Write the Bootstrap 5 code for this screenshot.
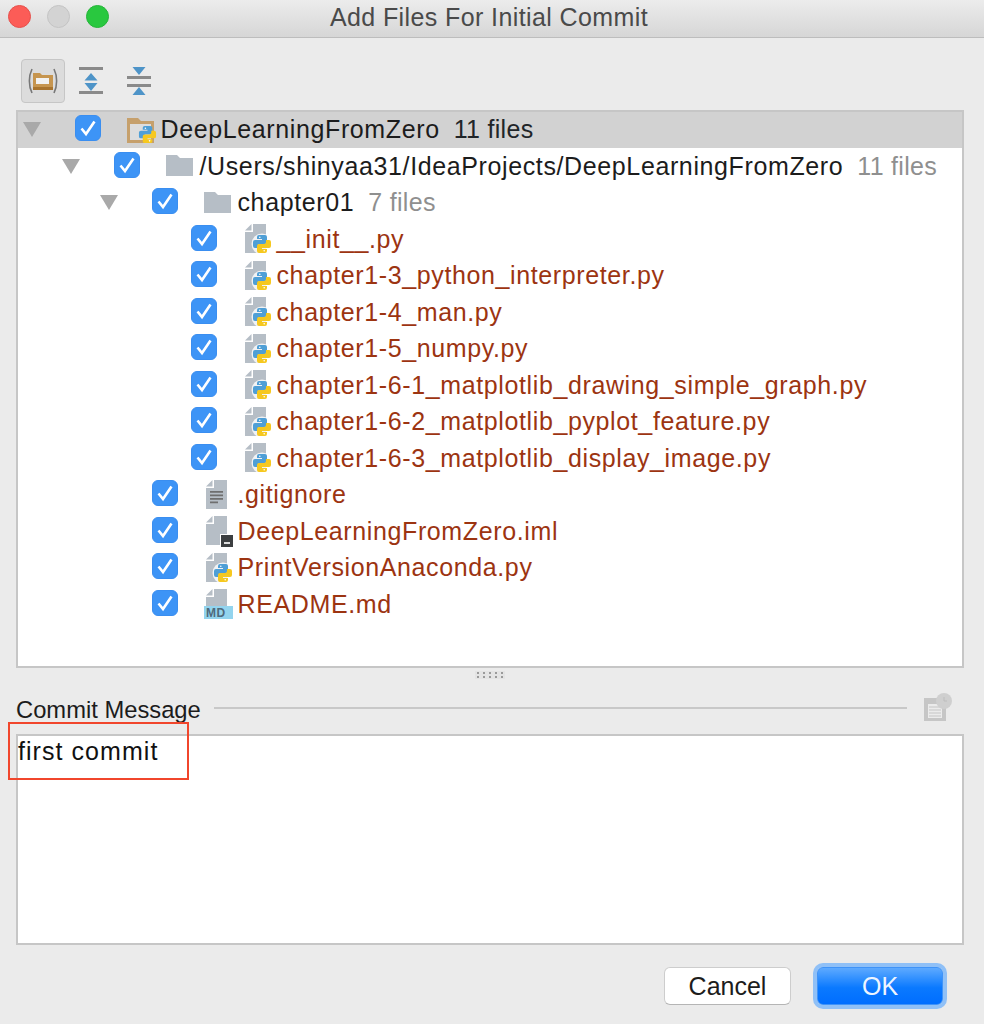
<!DOCTYPE html>
<html lang="en">
<head>
    <meta charset="UTF-8">
    <meta name="viewport" content="width=device-width, initial-scale=1.0">
    <title>Add Files For Initial Commit</title>
    <link href="https://cdn.jsdelivr.net/npm/bootstrap@5.3.0/dist/css/bootstrap.min.css" rel="stylesheet">
    <style>
        html, body { height: 1024px; overflow: hidden; }
        body {
            background: #ebebeb;
            font-family: "Liberation Sans", Arial, sans-serif;
            font-size: 25px;
            color: #1c1c1c;
        }
        .dialog { height: 1024px; position: relative; }
        .titlebar {
            height: 38px;
            background: linear-gradient(#ececec, #d6d6d6);
            border-bottom: 1px solid #bdbdbd;
            padding: 0 0 4px 8px;
            gap: 16px;
        }
        .light { width: 23px; height: 23px; border-radius: 50%; }
        .light-red { background: #fc5c57; border: 1px solid #e6504b; }
        .light-off { background: #d3d3d3; border: 1px solid #c4c4c4; }
        .light-green { background: #29c83f; border: 1px solid #25b539; }
        .wintitle {
            position: absolute; top: 0; left: 0; right: 6px; height: 37px;
            line-height: 35px; text-align: center; color: #4a4a4a; font-size: 25px; letter-spacing: .4px;
        }
        .toolbar { height: 71.5px; padding: 20.5px 0 0 21px; }
        .toolbtn { width: 44px; height: 44px; border-radius: 4px; border: 1px solid transparent; }
        .toolbtn-on { background: #dcdcdc; border-color: #c6c6c6; }
        .toolgap { margin-right: 4px; }
        .treepane {
            height: 558px; margin: 0 20px 0 16px;
            background: #fff; border: 2px solid #c6c6c6;
        }
        .treerow { height: 36.5px; white-space: nowrap; letter-spacing: .62px; }
        .treerow-sel { background: #d2d2d2; }
        .lvl0 { padding-left: 5px; }
        .lvl1 { padding-left: 44px; }
        .lvl2 { padding-left: 82px; }
        .lvl3 { padding-left: 121px; }
        .arrowslot { width: 52px; flex: none; }
        .arrow {
            width: 0; height: 0; display: block;
            border-left: 9px solid transparent; border-right: 9px solid transparent;
            border-top: 15px solid #a9a9a9;
        }
        .treerow .form-check-input {
            width: 26px; height: 26px; margin: 0 0 3px 0; flex: none;
            border: 1px solid #3a8ef0; border-radius: 6px; opacity: 1;
            background-color: #3d94f6;
            background-size: 26px;
            background-image: url("data:image/svg+xml,%3csvg xmlns='http://www.w3.org/2000/svg' viewBox='0 0 26 26'%3e%3cpath fill='none' stroke='%23fff' stroke-width='2.6' d='M6.500 13.500l4.500 5.500 8.500-12.500'/%3e%3c/svg%3e");
        }
        .nodeicon { width: 30px; height: 30px; margin-left: 28px; margin-right: 1.5px; flex: none; overflow: visible; }
        .filename { color: #9c3411; }
        .count { color: #8f8f8f; margin-left: 14px; letter-spacing: .3px; }
        .splitter { height: 30px; padding-top: 3px; }
        .grip {
            width: 30px; height: 8px; margin-right: 5px;
            background-image: radial-gradient(circle, #9a9a9a 1px, transparent 1.4px);
            background-size: 6px 4px; background-color: #e4e4e4;
        }
        .msghead { height: 25px; margin: 0 20px 0 16px; font-size: 23.75px; }
        .msghead .rule { height: 2px; background: #c8c8c8; margin: 0 0 4px 13px; }
        .msgicon { width: 32px; height: 32px; margin: 0 9px 4px 16px; flex: none; }
        .msgbox {
            display: block; width: calc(100% - 36px); height: 211px; margin: 11px 20px 0 16px;
            background: #fff; border: 2px solid #c6c6c6; border-radius: 0; resize: none;
            padding: 0; font-size: 25px; letter-spacing: 1.05px; color: #111; line-height: 30px;
        }
        .actions { padding: 22px 41px 0 0; gap: 26px; }
        .dlgbtn-cancel {
            width: 127px; height: 38.5px; padding: 2px 0 0;
            background: #fff; border: 1px solid #cdcdcd; border-bottom-color: #b5b5b5;
            border-radius: 6px; font-size: 25px; color: #1c1c1c; line-height: 1;
        }
        .dlgbtn-ok {
            width: 126px; height: 38.5px; padding: 2px 0 0; margin: 0;
            background: linear-gradient(#5eaaff, #0a79ff 55%, #006eff);
            border: 1px solid #3f93f8; border-radius: 6px;
            box-shadow: 0 0 0 4px #8fc0f7;
            font-size: 25px; color: #eef5ff; line-height: 1;
        }
        .callout {
            position: absolute; left: 8px; top: 722px; width: 181px; height: 58px;
            border: 2px solid #f1462c;
        }
    </style>
</head>
<body>
    <svg width="0" height="0" class="position-absolute">
        <defs>
            <symbol id="py" viewBox="0 0 20 20">
                <path id="pyhalf" fill="#4f9fd6" d="M5 3a2 2 0 0 1 2-2h6a2 2 0 0 1 2 2v5a2 2 0 0 1-2 2H8a2 2 0 0 0-2 2v2H3a2 2 0 0 1-2-2V8a2 2 0 0 1 2-2h7V5H5z"/>
                <path fill="#f6c81f" d="M5 3a2 2 0 0 1 2-2h6a2 2 0 0 1 2 2v5a2 2 0 0 1-2 2H8a2 2 0 0 0-2 2v2H3a2 2 0 0 1-2-2V8a2 2 0 0 1 2-2h7V5H5z" transform="rotate(180 10 10)"/>
                <circle cx="7.800" cy="3.300" r=".8" fill="#fff"/>
                <circle cx="12.200" cy="16.700" r=".8" fill="#fff"/>
            </symbol>
            <symbol id="sheet" viewBox="0 0 30 30">
                <path fill="#b6bec6" d="M8 0h13v29H0V8h8z"/>
                <path fill="#b6bec6" d="M0 6.500 6.500 0v6.500z"/>
            </symbol>
            <symbol id="pyfile" viewBox="0 0 30 30">
                <use href="#sheet" x="0" y="0" width="30" height="30"/>
                <circle cx="17" cy="20" r="10.500" fill="#fff" opacity=".8"/>
                <use href="#py" x="7" y="10" width="20" height="20"/>
            </symbol>
        </defs>
    </svg>

    <div class="dialog">
        <div class="titlebar d-flex align-items-center">
            <span class="light light-red"></span>
            <span class="light light-off"></span>
            <span class="light light-green"></span>
        </div>
        <div class="wintitle">Add Files For Initial Commit</div>

        <div class="toolbar d-flex align-items-start">
            <div class="toolbtn toolbtn-on toolgap d-flex align-items-center justify-content-center">
                <svg width="32" height="32" viewBox="0 0 32 32">
                    <path fill="none" stroke="#777" stroke-width="1.600" d="M5 4C1.500 11 1.500 21 5 28M27 4c3.500 7 3.500 17 0 24"/>
                    <path fill="#c6954f" d="M6 8h7l2 2h11v15H6z"/>
                    <rect x="9" y="13" width="13" height="6" fill="#f2f2f2"/>
                    <rect x="6" y="22" width="20" height="3" fill="#a9742e"/>
                </svg>
            </div>
            <div class="toolbtn toolgap d-flex align-items-center justify-content-center">
                <svg width="26" height="30" viewBox="0 0 26 30">
                    <rect x="1" y="1" width="24" height="3" fill="#8a8a8a"/>
                    <rect x="1" y="25" width="24" height="3" fill="#8a8a8a"/>
                    <path fill="#4e94c8" d="M13 7l6.500 7.500H6.500zM6.500 17h13L13 25z"/>
                </svg>
            </div>
            <div class="toolbtn d-flex align-items-center justify-content-center">
                <svg width="26" height="30" viewBox="0 0 26 30">
                    <rect x="1" y="10" width="24" height="3" fill="#8a8a8a"/>
                    <rect x="1" y="18" width="24" height="3" fill="#8a8a8a"/>
                    <path fill="#4e94c8" d="M6.500 1h13L13 9zM13 21l6.500 8h-13z"/>
                </svg>
            </div>
        </div>

        <div class="treepane">
            <div class="treerow treerow-sel lvl0 d-flex align-items-center">
                <span class="arrowslot"><span class="arrow"></span></span>
                <input class="form-check-input" type="checkbox" checked>
                <svg class="nodeicon" viewBox="0 0 30 30">
                    <path fill="#c6a06c" d="M-2 3h11l3 3h13v22H-2z"/>
                    <rect x="1" y="9" width="21" height="16" fill="#ddd"/>
                    <use href="#py" x="9" y="10" width="19" height="19"/>
                </svg>
                <span>DeepLearningFromZero</span><span class="count text-dark">11 files</span>
            </div>
            <div class="treerow lvl1 d-flex align-items-center">
                <span class="arrowslot"><span class="arrow"></span></span>
                <input class="form-check-input" type="checkbox" checked>
                <svg class="nodeicon" viewBox="0 0 30 30"><path fill="#b6bec6" d="M-2 4h11l3 3h13v18H-2z"/></svg>
                <span>/Users/shinyaa31/IdeaProjects/DeepLearningFromZero</span><span class="count">11 files</span>
            </div>
            <div class="treerow lvl2 d-flex align-items-center">
                <span class="arrowslot"><span class="arrow"></span></span>
                <input class="form-check-input" type="checkbox" checked>
                <svg class="nodeicon" viewBox="0 0 30 30"><path fill="#b6bec6" d="M-2 4h11l3 3h13v18H-2z"/></svg>
                <span>chapter01</span><span class="count">7 files</span>
            </div>
            <div class="treerow lvl3 d-flex align-items-center">
                <span class="arrowslot"></span>
                <input class="form-check-input" type="checkbox" checked>
                <svg class="nodeicon"><use href="#pyfile"/></svg>
                <span class="filename">__init__.py</span>
            </div>
            <div class="treerow lvl3 d-flex align-items-center">
                <span class="arrowslot"></span>
                <input class="form-check-input" type="checkbox" checked>
                <svg class="nodeicon"><use href="#pyfile"/></svg>
                <span class="filename">chapter1-3_python_interpreter.py</span>
            </div>
            <div class="treerow lvl3 d-flex align-items-center">
                <span class="arrowslot"></span>
                <input class="form-check-input" type="checkbox" checked>
                <svg class="nodeicon"><use href="#pyfile"/></svg>
                <span class="filename">chapter1-4_man.py</span>
            </div>
            <div class="treerow lvl3 d-flex align-items-center">
                <span class="arrowslot"></span>
                <input class="form-check-input" type="checkbox" checked>
                <svg class="nodeicon"><use href="#pyfile"/></svg>
                <span class="filename">chapter1-5_numpy.py</span>
            </div>
            <div class="treerow lvl3 d-flex align-items-center">
                <span class="arrowslot"></span>
                <input class="form-check-input" type="checkbox" checked>
                <svg class="nodeicon"><use href="#pyfile"/></svg>
                <span class="filename">chapter1-6-1_matplotlib_drawing_simple_graph.py</span>
            </div>
            <div class="treerow lvl3 d-flex align-items-center">
                <span class="arrowslot"></span>
                <input class="form-check-input" type="checkbox" checked>
                <svg class="nodeicon"><use href="#pyfile"/></svg>
                <span class="filename">chapter1-6-2_matplotlib_pyplot_feature.py</span>
            </div>
            <div class="treerow lvl3 d-flex align-items-center">
                <span class="arrowslot"></span>
                <input class="form-check-input" type="checkbox" checked>
                <svg class="nodeicon"><use href="#pyfile"/></svg>
                <span class="filename">chapter1-6-3_matplotlib_display_image.py</span>
            </div>
            <div class="treerow lvl2 d-flex align-items-center">
                <span class="arrowslot"></span>
                <input class="form-check-input" type="checkbox" checked>
                <svg class="nodeicon" viewBox="0 0 30 30">
                    <use href="#sheet"/>
                    <path fill="#6f6f6f" d="M4 11h13v1.800H4zM4 14.500h13v1.800H4zM4 18h13v1.800H4zM4 21.500h8v1.800H4z"/>
                </svg>
                <span class="filename">.gitignore</span>
            </div>
            <div class="treerow lvl2 d-flex align-items-center">
                <span class="arrowslot"></span>
                <input class="form-check-input" type="checkbox" checked>
                <svg class="nodeicon" viewBox="0 0 30 30">
                    <use href="#sheet"/>
                    <rect x="14" y="18" width="14" height="13" fill="#fff"/>
                    <rect x="15" y="19" width="12" height="12" fill="#3c3f41"/>
                    <rect x="18" y="26" width="6" height="2" fill="#ddd"/>
                </svg>
                <span class="filename">DeepLearningFromZero.iml</span>
            </div>
            <div class="treerow lvl2 d-flex align-items-center">
                <span class="arrowslot"></span>
                <input class="form-check-input" type="checkbox" checked>
                <svg class="nodeicon"><use href="#pyfile"/></svg>
                <span class="filename">PrintVersionAnaconda.py</span>
            </div>
            <div class="treerow lvl2 d-flex align-items-center">
                <span class="arrowslot"></span>
                <input class="form-check-input" type="checkbox" checked>
                <svg class="nodeicon" viewBox="0 0 30 30">
                    <use href="#sheet"/>
                    <rect x="-2" y="17" width="29" height="13" fill="#93d4ee"/>
                    <text x="0" y="28" font-family="Liberation Sans, sans-serif" font-weight="700" font-size="12" fill="#4f6a7c">MD</text>
                </svg>
                <span class="filename">README.md</span>
            </div>
        </div>

        <div class="splitter d-flex justify-content-center"><div class="grip"></div></div>

        <div class="msghead d-flex align-items-center">
            <span>Commit Message</span>
            <div class="rule flex-grow-1"></div>
            <svg class="msgicon" viewBox="0 0 32 32">
                <rect x="1" y="6" width="22" height="23" fill="#c6c6c6"/>
                <rect x="5" y="12" width="14" height="14" fill="#ebebeb"/>
                <path stroke="#c6c6c6" stroke-width="1.200" d="M6 15h12M6 18h12M6 21h12M6 24h12"/>
                <circle cx="21" cy="9" r="8" fill="#cfcfcf"/>
                <path stroke="#bdbdbd" fill="none" d="M21 5v4h3"/>
            </svg>
        </div>
        <textarea class="msgbox form-control shadow-none">first commit</textarea>

        <div class="actions d-flex justify-content-end align-items-start">
            <button type="button" class="btn dlgbtn-cancel">Cancel</button>
            <button type="button" class="btn dlgbtn-ok">OK</button>
        </div>

        <div class="callout"></div>
    </div>
</body>
</html>
